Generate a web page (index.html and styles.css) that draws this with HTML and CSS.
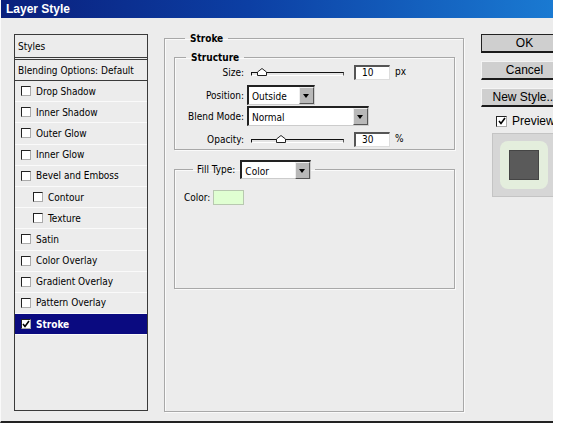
FILE: index.html
```html
<!DOCTYPE html>
<html lang="en">

<head>
    <meta charset="UTF-8">
    <title>Layer Style</title>
    <link rel="stylesheet" href="styles.css">
</head>

<body>
    <div class="dialog">
        <div class="titlebar">Layer Style</div>

        <div class="dialog-body">
            <!-- effect list on the left -->
            <ul class="style-list">
                <li class="list-head">Styles</li>
                <li class="blend-row">Blending Options: Default</li>
                <li><span class="check"></span>Drop Shadow</li>
                <li><span class="check"></span>Inner Shadow</li>
                <li><span class="check"></span>Outer Glow</li>
                <li><span class="check"></span>Inner Glow</li>
                <li><span class="check"></span>Bevel and Emboss</li>
                <li class="sub"><span class="check"></span>Contour</li>
                <li class="sub"><span class="check"></span>Texture</li>
                <li><span class="check"></span>Satin</li>
                <li><span class="check"></span>Color Overlay</li>
                <li><span class="check"></span>Gradient Overlay</li>
                <li><span class="check"></span>Pattern Overlay</li>
                <li class="selected">
                    <span class="check">
                        <svg viewBox="0 0 8 8" width="8" height="8"><path d="M1 4 L3 6.5 L7 1" fill="none" stroke="#000" stroke-width="1.6"/></svg>
                    </span>Stroke
                </li>
            </ul>

            <!-- stroke settings -->
            <fieldset class="group stroke-group">
                <legend>Stroke</legend>

                <fieldset class="group structure">
                    <legend>Structure</legend>

                    <div class="field row-size">
                        <label>Size:</label>
                        <div class="slider">
                            <span class="thumb" style="left: 5px;">
                                <svg viewBox="0 0 10 8" width="10" height="8"><path d="M0.5 7.5 V4 L5 0.5 L9.5 4 V7.5 Z" fill="#fff" stroke="#222"/></svg>
                            </span>
                        </div>
                        <span class="num-box">10</span>
                        <span class="unit">px</span>
                    </div>

                    <div class="field row-position">
                        <label>Position:</label>
                        <div class="select select-short"><span>Outside</span><span class="arrow"></span></div>
                    </div>

                    <div class="field row-blend">
                        <label>Blend Mode:</label>
                        <div class="select select-long"><span>Normal</span><span class="arrow"></span></div>
                    </div>

                    <div class="field row-opacity">
                        <label>Opacity:</label>
                        <div class="slider">
                            <span class="thumb" style="left: 24px;">
                                <svg viewBox="0 0 10 8" width="10" height="8"><path d="M0.5 7.5 V4 L5 0.5 L9.5 4 V7.5 Z" fill="#fff" stroke="#222"/></svg>
                            </span>
                        </div>
                        <span class="num-box">30</span>
                        <span class="unit">%</span>
                    </div>
                </fieldset>

                <fieldset class="group fill">
                    <legend>
                        <span class="fill-label">Fill Type:</span>
                        <div class="select select-fill"><span>Color</span><span class="arrow"></span></div>
                    </legend>
                    <div class="color-row">
                        <span>Color:</span>
                        <span class="swatch"></span>
                    </div>
                </fieldset>
            </fieldset>

            <!-- buttons and preview -->
            <div class="actions">
                <button class="btn btn-default">OK</button>
                <button class="btn">Cancel</button>
                <button class="btn">New Style...</button>
                <div class="preview-check">
                    <span class="check">
                        <svg viewBox="0 0 8 8" width="8" height="8"><path d="M1 4 L3 6.5 L7 1" fill="none" stroke="#000" stroke-width="1.6"/></svg>
                    </span>Preview
                </div>
                <div class="preview-box">
                    <div class="preview-glow">
                        <div class="preview-square"></div>
                    </div>
                </div>
            </div>
        </div>
    </div>
</body>

</html>
```

FILE: styles.css
```css
* {
    box-sizing: border-box;
    margin: 0;
    padding: 0;
}

body {
    background-color: #fff;
    font-family: "DejaVu Sans Condensed", "Liberation Sans", sans-serif;
    font-size: 10px;
    color: #000;
}

.dialog {
    width: 553px;
    height: 423px;
    background-color: #ececec;
    border-left: 1px solid #fafafa;
    border-bottom: 2px solid #222;
    overflow: hidden;
}

.titlebar {
    height: 18px;
    line-height: 18px;
    padding-left: 5px;
    color: #fff;
    font-family: "Liberation Sans", sans-serif;
    font-size: 12px;
    font-weight: bold;
    background: linear-gradient(to right, #0a1f7c, #0c3fa4 45%, #1a7ad2);
}

.dialog-body {
    display: flex;
    align-items: flex-start;
    padding: 16px 0 0 13px;
}

/* left list */
.style-list {
    list-style: none;
    width: 134px;
    height: 377px;
    border: 1px solid #3a3a3a;
    background-color: #ececec;
    flex-shrink: 0;
}

.style-list li {
    display: flex;
    align-items: center;
    height: 21.2px;
    padding-left: 6px;
    border-bottom: 1px solid #fafafa;
    white-space: nowrap;
}

.style-list .list-head {
    height: 25px;
    padding-left: 3px;
    border-bottom: 3px double #3a3a3a;
}

.style-list .blend-row {
    height: 21px;
    padding-left: 3px;
    border-bottom: 1px solid #3a3a3a;
}

.style-list .sub {
    padding-left: 18px;
}

.style-list .selected {
    background-color: #0a0a80;
    color: #fff;
    font-weight: bold;
}

.check {
    display: inline-flex;
    align-items: center;
    justify-content: center;
    width: 10px;
    height: 10px;
    margin-right: 5px;
    background-color: #fff;
    border-top: 1px solid #222;
    border-left: 1px solid #222;
    border-right: 1px solid #aaa;
    border-bottom: 1px solid #aaa;
    flex-shrink: 0;
}

/* group boxes */
.group {
    border: 1px solid #a8a8a8;
    box-shadow: inset 1px 1px 0 #fafafa, 1px 1px 0 #fafafa;
}

.group legend {
    margin-left: 11px;
    padding: 0 5px;
    font-weight: bold;
    line-height: 13px;
}

.stroke-group {
    width: 300px;
    height: 380px;
    margin-left: 16px;
    margin-top: -2px;
    padding: 6px 8px 0 9px;
    flex-shrink: 0;
}

.structure {
    padding: 0 0 1px 0;
}

.field {
    display: flex;
    align-items: center;
}

.field label {
    width: 72px;
    text-align: right;
    padding-right: 3px;
}

.row-size {
    height: 16px;
}

.row-position {
    height: 20px;
    margin-top: 5px;
}

.row-blend {
    height: 20px;
    margin-top: 1px;
}

.row-opacity {
    height: 18px;
    margin-top: 4px;
}

.slider {
    position: relative;
    width: 93px;
    height: 4px;
    margin-left: 4px;
    margin-top: 3px;
    border-top: 1px solid #111;
    border-left: 1px solid #111;
    border-right: 1px solid #555;
    border-bottom: 1px solid #fff;
    background-color: #e4e4e4;
}

.thumb {
    position: absolute;
    top: -5px;
    line-height: 0;
}

.num-box {
    width: 36px;
    height: 15px;
    margin-left: 10px;
    padding-left: 6px;
    line-height: 12px;
    background-color: #fff;
    border-top: 2px solid #555;
    border-left: 2px solid #555;
    border-right: 1px solid #ddd;
    border-bottom: 1px solid #ddd;
}

.unit {
    margin-left: 5px;
    margin-top: -2px;
}

.select {
    display: flex;
    align-items: center;
    justify-content: space-between;
    height: 20px;
    padding-left: 3px;
    background-color: #fff;
    border-top: 2px solid #222;
    border-left: 2px solid #222;
    border-right: 1px solid #ccc;
    border-bottom: 1px solid #ccc;
    font-weight: normal;
}

.select span {
    padding-top: 2px;
}

.select .arrow {
    position: relative;
    width: 15px;
    height: 17px;
    background-color: #b8b8b8;
    border-left: 1px solid #eee;
    border-top: 1px solid #eee;
    border-right: 1px solid #555;
    border-bottom: 1px solid #555;
}

.select .arrow::after {
    content: "";
    position: absolute;
    left: 3px;
    top: 6px;
    border-left: 3.5px solid transparent;
    border-right: 3.5px solid transparent;
    border-top: 4px solid #000;
}

.select-short {
    width: 68px;
}

.select-long {
    width: 122px;
}

.select-fill {
    width: 71px;
    height: 19px;
}

/* fill type group */
.fill {
    height: 129px;
    margin-top: 10px;
    padding-left: 9px;
}

.fill legend {
    display: flex;
    align-items: center;
    margin-left: 9px;
    padding: 0 4px 0 4px;
    line-height: normal;
}

.fill-label {
    font-weight: normal;
    margin-right: 5px;
}

.color-row {
    display: flex;
    align-items: center;
    margin-top: 11px;
    height: 15px;
}

.swatch {
    width: 31px;
    height: 15px;
    margin-left: 3px;
    background-color: #e0ffd2;
    border: 1px solid #b8c8b0;
}

/* right column */
.actions {
    display: flex;
    flex-direction: column;
    margin-left: 17px;
    width: 86px;
    flex-shrink: 0;
}

.btn {
    width: 86px;
    height: 19px;
    margin-bottom: 8px;
    font-family: "Liberation Sans", sans-serif;
    font-size: 12px;
    background-color: #cfcfcf;
    border: none;
    border-top: 1px solid #f4f4f4;
    border-left: 1px solid #f4f4f4;
    border-bottom: 2px solid #1a1a1a;
    color: #000;
}

.btn-default {
    border-top: 1px solid #222;
    border-left: 1px solid #222;
}

.preview-check {
    display: flex;
    align-items: center;
    margin-left: 15px;
    margin-top: -1px;
    font-family: "Liberation Sans", sans-serif;
    font-size: 12px;
}

.preview-check .check {
    width: 11px;
    height: 11px;
    margin-right: 5px;
}

.preview-box {
    width: 80px;
    height: 64px;
    margin-left: 11px;
    margin-top: 5px;
    padding: 7px 0 0 7px;
    background-color: #d6d6d6;
    border: 1px solid #c4c4c4;
}

.preview-glow {
    width: 48px;
    height: 48px;
    padding: 9px;
    border-radius: 8px;
    background-color: #e4eedd;
}

.preview-square {
    width: 30px;
    height: 30px;
    background-color: #5a5a5a;
    border: 1px solid #454545;
}
```
